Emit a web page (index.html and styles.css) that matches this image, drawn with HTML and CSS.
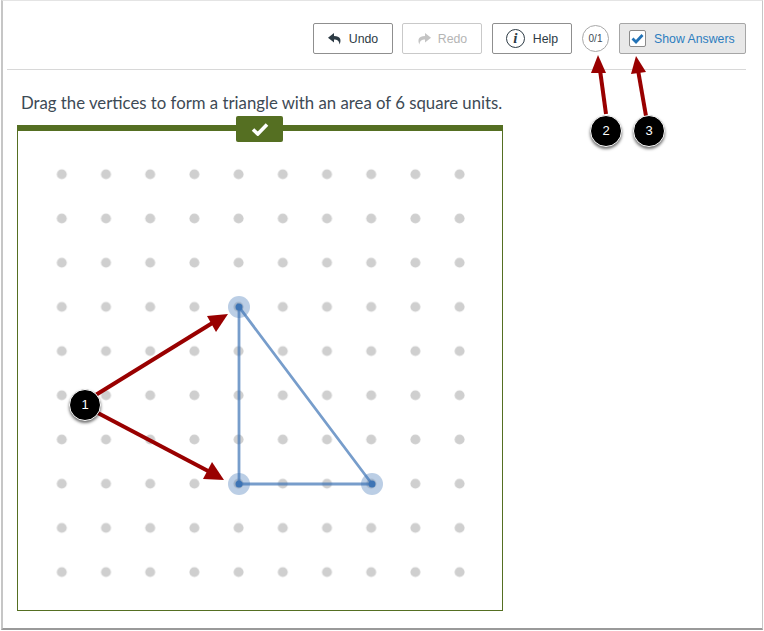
FILE: index.html
```html
<!DOCTYPE html>
<html lang="en">
<head>
  <meta charset="UTF-8" />
  <title>Graphing Question</title>
  <link rel="stylesheet" href="styles.css">
</head>
<body>
  <div class="window">
    <div class="toolbar">
      <button class="btn" type="button">
        <svg class="btn-icon" width="14" height="12" viewBox="0 0 14 12"><path d="M6 0 0 4.8 6 9.6V6.6c3 0 5 .8 5.6 4.9C13.6 7 12.6 3 6 3z" fill="#2d3b45"/></svg>
        Undo
      </button>
      <button class="btn btn-disabled" type="button">
        <svg class="btn-icon" width="14" height="12" viewBox="0 0 14 12"><path d="M8 0l6 4.8-6 4.8V6.6c-3 0-5 .8-5.6 4.9C.4 7 1.4 3 8 3z" fill="#c4c4c4"/></svg>
        Redo
      </button>
      <button class="btn btn-help" type="button">
        <span class="info-icon">i</span>
        Help
      </button>
      <div class="score">0/1</div>
      <button class="btn btn-answers" type="button">
        <span class="checkbox">
          <svg width="13" height="11" viewBox="0 0 13 11"><path d="M1.5 5.5 5 9l6.5-7" fill="none" stroke="#2272b6" stroke-width="2.8"/></svg>
        </span>
        Show Answers
      </button>
    </div>

    <div class="question">
      <p class="prompt">Drag the vertices to form a triangle with an area of 6 square units.</p>
      <div class="graph">
        <div class="graph-tab">
          <svg width="18" height="14" viewBox="0 0 18 14"><path d="M2 7.5 6.8 12 16 2.5" fill="none" stroke="#fff" stroke-width="3.6"/></svg>
        </div>
        <svg class="graph-canvas" width="484" height="478" viewBox="18 131 484 478">
          <defs>
            <pattern id="dots" x="39.7" y="152.2" width="44.2" height="44.2" patternUnits="userSpaceOnUse">
              <circle cx="22.1" cy="22.1" r="5" fill="#cfcfcf"/>
            </pattern>
          </defs>
          <rect x="39.7" y="152.2" width="442" height="442" fill="url(#dots)"/>
          <polygon points="239,307 239,484 372,484" fill="none" stroke="#3d74b5" stroke-opacity="0.7" stroke-width="2.8"/>
          <circle cx="239" cy="307" r="11" fill="#3d74b5" fill-opacity="0.35"/>
          <circle cx="239" cy="484" r="11" fill="#3d74b5" fill-opacity="0.35"/>
          <circle cx="372" cy="484" r="11" fill="#3d74b5" fill-opacity="0.35"/>
          <circle cx="239" cy="307" r="3.5" fill="#3d74b5"/>
          <circle cx="239" cy="484" r="3.5" fill="#3d74b5"/>
          <circle cx="372" cy="484" r="3.5" fill="#3d74b5"/>
        </svg>
      </div>
    </div>
  </div>

  <!-- callouts that sit on top of the screenshot -->
  <svg class="callouts" width="764" height="631" viewBox="0 0 764 631">
    <g stroke="#990000" stroke-width="4">
      <line x1="94" y1="396" x2="214" y2="322"/>
      <line x1="96" y1="412" x2="210" y2="472"/>
      <line x1="606" y1="114" x2="600" y2="70"/>
      <line x1="646" y1="116" x2="638" y2="70"/>
    </g>
    <g fill="#990000">
      <polygon points="228,314 216,332 207,316"/>
      <polygon points="224,480 203,479 212,462"/>
      <polygon points="598,55 606,73 591,73"/>
      <polygon points="636,56 646,72 631,74"/>
    </g>
  </svg>
  <div class="badge badge-one">1</div>
  <div class="badge badge-two">2</div>
  <div class="badge badge-three">3</div>
</body>
</html>
```

FILE: styles.css
```css
body {
  margin: 0;
  background: white;
  font-family: "Liberation Sans", Arial, sans-serif;
  position: relative;
  width: 764px;
  height: 631px;
  overflow: hidden;
}
.window {
  box-sizing: border-box;
  width: 762px;
  height: 630px;
  margin-left: 1px;
  background: white;
  border: 1px solid #c6c6c6;
  border-left-width: 2px;
  border-top-color: #e4e4e4;
  border-bottom: 2px solid #9a9a9a;
}
.toolbar {
  display: flex;
  align-items: center;
  justify-content: flex-end;
  margin: 0 16px 0 4px;
  padding: 22px 0 15px;
  border-bottom: 1px solid #d8d8d8;
}
.btn {
  box-sizing: border-box;
  display: flex;
  align-items: center;
  justify-content: center;
  gap: 7px;
  width: 80px;
  height: 31px;
  margin-left: 10px;
  padding: 0;
  background: white;
  border: 1px solid #8f8f8f;
  border-radius: 2px;
  color: #2d3b45;
  font-family: inherit;
  font-size: 12.3px;
}
.btn-disabled {
  margin-left: 9px;
  border-color: #c9c9c9;
  color: #b5b5b5;
}
.btn-help {
  gap: 8px;
}
.info-icon {
  box-sizing: border-box;
  width: 19px;
  height: 19px;
  border: 1.5px solid #2d3b45;
  border-radius: 50%;
  font-family: "Liberation Serif", serif;
  font-size: 15px;
  font-style: italic;
  font-weight: bold;
  line-height: 16px;
  text-align: center;
}
.score {
  box-sizing: border-box;
  width: 27px;
  height: 27px;
  margin-left: 10px;
  border: 1px solid #a8a8a8;
  border-radius: 50%;
  color: #3d4a55;
  font-size: 10px;
  line-height: 25px;
  text-align: center;
}
.btn-answers {
  justify-content: flex-start;
  gap: 8px;
  width: 127px;
  padding-left: 9px;
  background: #e8e8e8;
  border-color: #a6a6a6;
  color: #2d7dbf;
}
.checkbox {
  box-sizing: border-box;
  display: flex;
  align-items: center;
  justify-content: center;
  width: 17px;
  height: 17px;
  background: white;
  border: 1px solid #8a8a8a;
  border-radius: 2px;
}
.question {
  margin-left: 14px;
}
.prompt {
  margin: 21px 0 10px 4px;
  color: #3d4a55;
  font-family: Lato, sans-serif;
  font-size: 16.75px;
  line-height: 24px;
}
.graph {
  position: relative;
  box-sizing: border-box;
  width: 486px;
  height: 486px;
  border: 1px solid #556f22;
  border-top: 6px solid #556f22;
}
.graph-tab {
  position: absolute;
  top: -15px;
  left: 218px;
  display: flex;
  align-items: center;
  justify-content: center;
  width: 47px;
  height: 26px;
  background: #556f22;
  border-radius: 2px;
}
.graph-canvas {
  display: block;
}
.callouts {
  position: absolute;
  top: 0;
  left: 0;
}
.badge {
  position: absolute;
  box-sizing: border-box;
  width: 32px;
  height: 32px;
  background: black;
  border: 1px solid white;
  border-radius: 50%;
  box-shadow: 0 2px 3px rgba(0, 0, 0, 0.55);
  color: white;
  font-size: 13px;
  line-height: 30px;
  text-align: center;
}
.badge-one {
  top: 389px;
  left: 69px;
}
.badge-two {
  top: 115px;
  left: 590px;
}
.badge-three {
  top: 115px;
  left: 633px;
}
```
